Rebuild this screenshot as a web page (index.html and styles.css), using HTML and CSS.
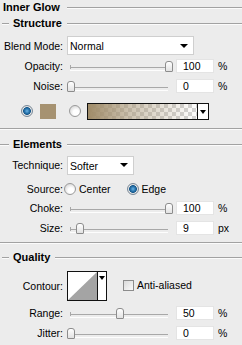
FILE: index.html
```html
<!DOCTYPE html>
<html>
<head>
<meta charset="utf-8">
<link rel="stylesheet" href="styles.css">
</head>
<body>
<div class="panel">
  <div class="title"><span>Inner Glow</span><i class="rule"></i></div>
  <div class="legend h-structure"><i class="lead"></i><span>Structure</span><i class="rule"></i></div>

  <div class="row r-blend">
    <span class="lbl">Blend Mode:</span>
    <div class="select s-blend"><span>Normal</span><b class="arrow"></b></div>
  </div>
  <div class="row r-opacity">
    <span class="lbl">Opacity:</span>
    <div class="slider"><i class="thumb" style="left:94.5px"></i></div>
    <div class="num">100</div><span class="unit">%</span>
  </div>
  <div class="row r-noise">
    <span class="lbl">Noise:</span>
    <div class="slider"><i class="thumb" style="left:-3.5px"></i></div>
    <div class="num">0</div><span class="unit">%</span>
  </div>
  <div class="row r-color">
    <i class="radio on r1"></i>
    <i class="swatch"></i>
    <i class="radio r2"></i>
    <div class="gradient"><i class="grad-fill"></i><b class="garrow"><i class="arrow"></i></b></div>
  </div>

  <div class="sep s1"><i></i></div>
  <div class="legend h-elements"><i class="lead"></i><span>Elements</span><i class="rule"></i></div>

  <div class="row r-tech">
    <span class="lbl">Technique:</span>
    <div class="select s-tech"><span>Softer</span><b class="arrow"></b></div>
  </div>
  <div class="row r-source">
    <span class="lbl">Source:</span>
    <i class="radio src1"></i><span class="opt">Center</span>
    <i class="radio on src2"></i><span class="opt">Edge</span>
  </div>
  <div class="row r-choke">
    <span class="lbl">Choke:</span>
    <div class="slider"><i class="thumb" style="left:94.5px"></i></div>
    <div class="num">100</div><span class="unit">%</span>
  </div>
  <div class="row r-size">
    <span class="lbl">Size:</span>
    <div class="slider"><i class="thumb" style="left:6px"></i></div>
    <div class="num">9</div><span class="unit">px</span>
  </div>

  <div class="sep s2"><i></i></div>
  <div class="legend h-quality"><i class="lead"></i><span>Quality</span><i class="rule"></i></div>

  <div class="row r-contour">
    <span class="lbl">Contour:</span>
    <div class="contour">
      <svg class="curve" width="29" height="28" viewBox="0 0 29 28"><polygon points="0,28 29,0 29,28" fill="#a4a4a4"/></svg>
      <b class="carrow"><i class="arrow"></i></b>
    </div>
    <i class="check"></i><span class="opt">Anti-aliased</span>
  </div>
  <div class="row r-range">
    <span class="lbl">Range:</span>
    <div class="slider"><i class="thumb" style="left:45.5px"></i></div>
    <div class="num">50</div><span class="unit">%</span>
  </div>
  <div class="row r-jitter">
    <span class="lbl">Jitter:</span>
    <div class="slider"><i class="thumb" style="left:-3px"></i></div>
    <div class="num">0</div><span class="unit">%</span>
  </div>
</div>
</body>
</html>
```

FILE: styles.css
```css
* { box-sizing: border-box; }
html, body { margin: 0; padding: 0; }
body {
  background: #ececec;
  width: 242px;
  height: 345px;
  overflow: hidden;
  font-family: "Liberation Sans", Arial, sans-serif;
  font-size: 10.5px;
  color: #000;
}
.panel { display: flex; flex-direction: column; width: 242px; }

.title, .legend {
  display: flex;
  align-items: center;
  font-weight: bold;
  font-size: 11px;
}
.title { height: 14px; padding-left: 3px; }
.title span { margin-right: 7px; }
.rule, .lead, .sep i {
  display: block;
  height: 2px;
  border-top: 1px solid #a2a2a2;
  border-bottom: 1px solid #fbfbfb;
  margin-top: 1px;
}
.rule { flex: 1; }
.lead { width: 7px; margin-left: 2px; margin-right: 4px; }
.legend span { margin-right: 5px; }
.h-structure { height: 18px; }
.h-elements { height: 20px; }
.h-elements .lead { width: 9px; margin-left: 0; }
.h-quality { height: 26px; }

.sep { display: flex; align-items: center; }
.sep i { flex: 1; margin-top: 0; }
.s1 { height: 11px; }
.s2 { height: 3px; }

.row { display: flex; align-items: center; }
.lbl { width: 63px; text-align: right; flex: none; white-space: nowrap; }

.r-blend { height: 27px; }
.r-opacity { height: 14px; }
.r-noise { height: 26px; }
.r-color { height: 24px; }
.r-tech { height: 22px; }
.r-source { height: 25px; }
.r-choke { height: 14px; }
.r-size { height: 26px; }
.r-contour { height: 32px; }
.r-range { height: 22px; }
.r-jitter { height: 18px; }

.select {
  height: 19px;
  margin-left: 4px;
  background: #fff;
  border: 1px solid #cfcfcf;
  display: flex;
  align-items: center;
  padding-left: 2px;
  position: relative;
}
.s-blend { width: 127px; }
.s-tech { width: 67px; }
.select span { flex: 1; padding-top: 1px; }
.select .arrow { margin-right: 5px; }
.arrow {
  display: block;
  width: 0; height: 0;
  border-left: 4px solid transparent;
  border-right: 4px solid transparent;
  border-top: 4px solid #000;
}

.slider {
  position: relative;
  width: 98px;
  height: 12px;
  margin-left: 7px;
  flex: none;
}
.slider::before {
  content: "";
  position: absolute;
  left: 0; right: 0; top: 7px;
  height: 2px;
  border-top: 1px solid #a8a8a8;
  border-bottom: 1px solid #fdfdfd;
}
.slider::after {
  content: "";
  position: absolute;
  left: 0; top: 5px;
  width: 1px; height: 4px;
  background: #a8a8a8;
}
.thumb {
  position: absolute;
  top: 1px;
  width: 8px;
  height: 11px;
  border: 1px solid #8c8c8c;
  border-radius: 3px 3px 1px 1px;
  background: linear-gradient(#ffffff, #e2e2e2);
  z-index: 1;
}
.num {
  width: 38px;
  height: 14px;
  margin-left: 8px;
  background: #fff;
  border: 1px solid #e4e4e4;
  padding-left: 6px;
  line-height: 12px;
  flex: none;
}
.unit { margin-left: 4px; }

.radio {
  display: block;
  width: 12px; height: 12px;
  border-radius: 50%;
  border: 1px solid #9a9a9a;
  background: radial-gradient(circle at 60% 65%, #ffffff 0 30%, #dcdcdc 75%);
  flex: none;
}
.radio.on {
  border-color: #7a8a99;
  background: radial-gradient(circle at 50% 50%, #6ab4e6 0, #2570a8 2.5px, #1a5a8c 3.6px, #e8e8e8 4.2px, #c8c8c8 6px);
}
.r1 { margin-left: 21px; }
.swatch {
  display: block;
  width: 16px; height: 15px;
  margin-left: 7px;
  background: #a69271;
}
.r2 { margin-left: 13px; }
.gradient {
  display: flex;
  width: 122px;
  height: 17px;
  margin-left: 6px;
  border: 1px solid #111;
  background-color: #fff;
  background-image: conic-gradient(#d4d4d4 25%, #fff 25% 50%, #d4d4d4 50% 75%, #fff 75%);
  background-size: 8px 8px;
}
.grad-fill { flex: 1; display: block; background: linear-gradient(to right, #a08c69 0%, rgba(168,150,118,0.55) 40%, rgba(200,190,170,0) 100%); }
.garrow {
  width: 11px;
  border-left: 1px solid #111;
  background: #fff;
  display: flex;
  justify-content: center;
  padding-top: 6px;
}
.garrow .arrow { border-left-width: 3px; border-right-width: 3px; }

.src1 { margin-left: 1px; }
.opt { margin-left: 3px; }
.src2 { margin-left: 16px; }

.contour {
  display: flex;
  width: 40px;
  height: 30px;
  margin-left: 4px;
  border: 1px solid #111;
  background: #fff;
}
.curve { display: block; flex: none; }
.carrow {
  flex: 1;
  border-left: 1px solid #111;
  display: flex;
  justify-content: center;
  padding-top: 4px;
}
.carrow .arrow { border-left-width: 3px; border-right-width: 3px; }
.check {
  display: block;
  width: 11px; height: 11px;
  margin-left: 16px;
  margin-top: -2px;
  border: 1px solid #8c8c8c;
  background: linear-gradient(135deg, #dadada, #fafafa);
}
.r-contour .opt { margin-top: -2px; }
```
